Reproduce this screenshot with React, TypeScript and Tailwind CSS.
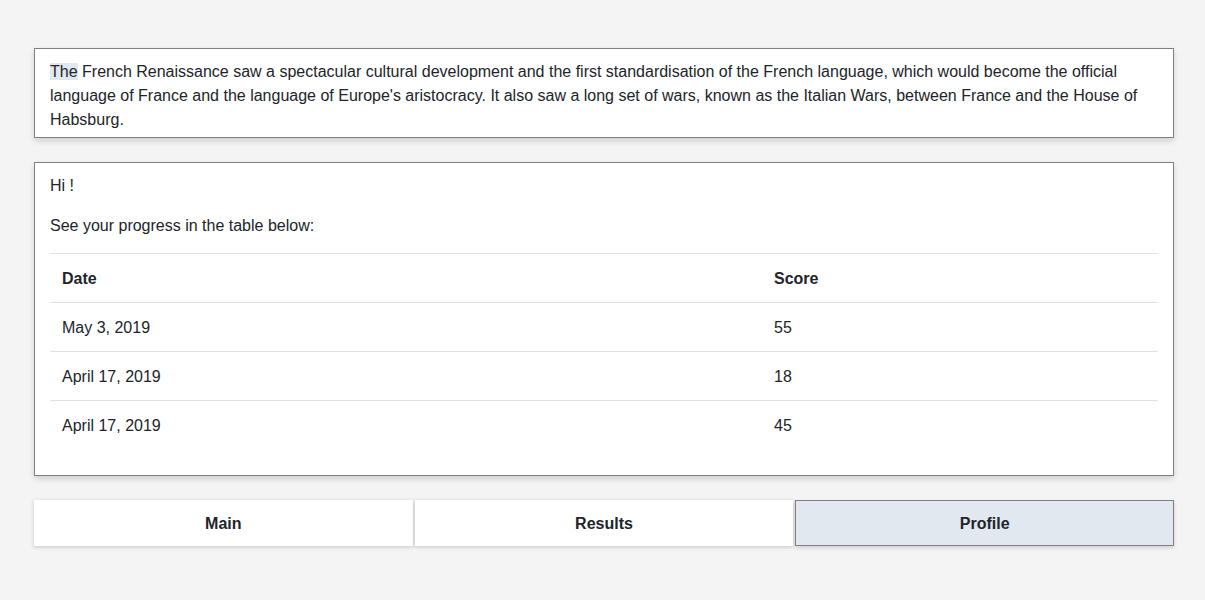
const rows = [
  { date: 'May 3, 2019', score: 55 },
  { date: 'April 17, 2019', score: 18 },
  { date: 'April 17, 2019', score: 45 },
]

const tabs = ['Main', 'Results', 'Profile']

export default function App() {
  const active = 'Profile'

  return (
    <div className="min-h-[600px] bg-[#f4f4f4] pl-[34px] pr-[31px] pt-[48px] font-['Liberation_Sans',Arial,sans-serif] text-[16px] text-[#212529]">
      {/* Intro text */}
      <div className="border border-[#808080] bg-white px-[15px] pt-[11px] pb-[5px] shadow-[0_3px_6px_rgba(0,0,0,0.15)]">
        <p className="leading-[24px]">
          <span className="bg-[#e2e8f0]">The</span> French Renaissance saw a spectacular cultural development and the first standardisation of the French language, which would become the official language of France and the language of Europe's aristocracy. It also saw a long set of wars, known as the Italian Wars, between France and the House of Habsburg.
        </p>
      </div>

      {/* Progress */}
      <div className="mt-[24px] h-[314px] border border-[#808080] bg-white px-[15px] pt-[11px] shadow-[0_3px_6px_rgba(0,0,0,0.15)]">
        <p className="leading-[24px]">Hi !</p>
        <p className="mt-[16px] leading-[24px]">See your progress in the table below:</p>
        <table className="mt-[15px] w-full border-collapse">
          <thead>
            <tr className="border-t border-b border-[#dee2e6]">
              <th className="h-[49px] w-[712px] px-[12px] pt-[2px] text-left font-bold">Date</th>
              <th className="h-[49px] px-[12px] pt-[2px] text-left font-bold">Score</th>
            </tr>
          </thead>
          <tbody>
            {rows.map((r, i) => (
              <tr key={i} className={i < rows.length - 1 ? 'border-b border-[#dee2e6]' : ''}>
                <td className="h-[49px] px-[12px] pt-[2px]">{r.date}</td>
                <td className="h-[49px] px-[12px] pt-[2px]">{r.score}</td>
              </tr>
            ))}
          </tbody>
        </table>
      </div>

      {/* Tabs */}
      <div className="mt-[24px] grid grid-cols-3 gap-[2px]">
        {tabs.map((t) =>
          t === active ? (
            <button
              key={t}
              className="h-[46px] border border-[#808080] bg-[#e2e8f0] pt-[2px] font-bold text-[#212529] shadow-[0_2px_4px_rgba(0,0,0,0.15)]"
            >
              {t}
            </button>
          ) : (
            <button
              key={t}
              className="h-[46px] bg-white pt-[2px] font-bold text-[#212529] shadow-[0_1px_4px_rgba(0,0,0,0.2)]"
            >
              {t}
            </button>
          )
        )}
      </div>
    </div>
  )
}
